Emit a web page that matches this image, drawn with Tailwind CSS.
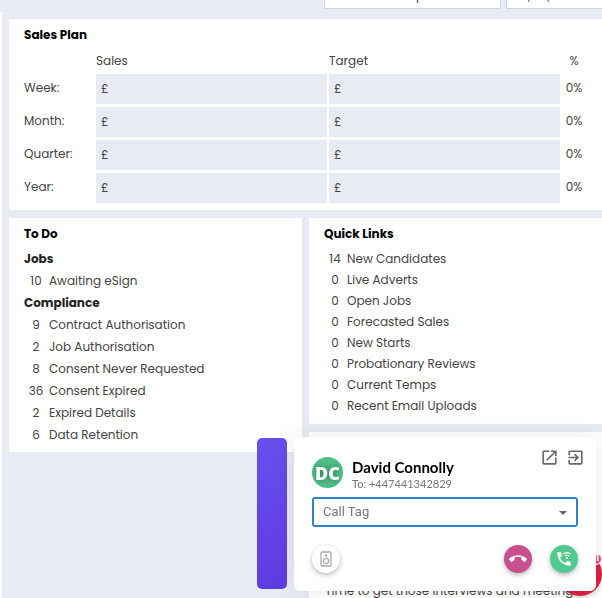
<!DOCTYPE html>
<html lang="en">
<head>
  <meta charset="UTF-8" />
  <meta name="viewport" content="width=device-width, initial-scale=1.0" />
  <title>Dashboard</title>
  <script src="https://cdn.jsdelivr.net/npm/@tailwindcss/browser@4"></script>
</head>
<body class="h-screen overflow-hidden bg-[#e8ebf3] font-[Poppins,Inter,sans-serif] text-xs text-[#444]">

  <div class="flex min-h-screen">
    <!-- Sidebar edge -->
    <div class="mt-3 w-[2px] shrink-0 bg-white"></div>

    <main class="ml-[7px] min-w-0 flex-1">
      <!-- Filter boxes -->
      <div class="-mt-[15px] flex justify-end gap-[5px] leading-5">
        <div class="h-6 w-[177px] border border-[#cfd5e8] bg-white pr-[2px] pl-[91px]">p</div>
        <div class="flex h-6 w-24 gap-[17px] border-y border-l border-[#cfd5e8] bg-white pl-[21px]"><span>,</span><span>,</span></div>
      </div>

      <!-- Sales Plan -->
      <section class="mt-[10px] bg-white pt-[5px] pr-4 pb-1 pl-[15px]">
        <h2 class="leading-[22px] font-bold text-black">Sales Plan</h2>
        <table class="w-full table-fixed border-separate border-spacing-0">
          <thead>
            <tr class="h-7 text-left">
              <th class="w-[72px] p-0"></th>
              <th class="p-0 pt-[2px] font-normal" id="sales">Sales</th>
              <th class="p-0 pt-[2px] font-normal" id="target">Target</th>
              <th class="w-6 p-0 pt-[2px] text-center font-normal">%</th>
            </tr>
          </thead>
          <tbody>
            <tr>
              <th class="p-0 pb-[5px] text-left font-normal" id="week">Week:</th>
              <td class="p-0 pr-[2px] pb-[3px]"><input type="text" value="£" aria-labelledby="week sales" class="block h-[30px] w-full bg-[#e8ebf3] px-[5px]" /></td>
              <td class="p-0 pr-[2px] pb-[3px]"><input type="text" value="£" aria-labelledby="week target" class="block h-[30px] w-full bg-[#e8ebf3] px-[5px]" /></td>
              <td class="p-0 pb-[5px] text-center">0%</td>
            </tr>
            <tr>
              <th class="p-0 pb-[5px] text-left font-normal" id="month">Month:</th>
              <td class="p-0 pr-[2px] pb-[3px]"><input type="text" value="£" aria-labelledby="month sales" class="block h-[30px] w-full bg-[#e8ebf3] px-[5px]" /></td>
              <td class="p-0 pr-[2px] pb-[3px]"><input type="text" value="£" aria-labelledby="month target" class="block h-[30px] w-full bg-[#e8ebf3] px-[5px]" /></td>
              <td class="p-0 pb-[5px] text-center">0%</td>
            </tr>
            <tr>
              <th class="p-0 pb-[5px] text-left font-normal" id="quarter">Quarter:</th>
              <td class="p-0 pr-[2px] pb-[3px]"><input type="text" value="£" aria-labelledby="quarter sales" class="block h-[30px] w-full bg-[#e8ebf3] px-[5px]" /></td>
              <td class="p-0 pr-[2px] pb-[3px]"><input type="text" value="£" aria-labelledby="quarter target" class="block h-[30px] w-full bg-[#e8ebf3] px-[5px]" /></td>
              <td class="p-0 pb-[5px] text-center">0%</td>
            </tr>
            <tr>
              <th class="p-0 pb-[5px] text-left font-normal" id="year">Year:</th>
              <td class="p-0 pr-[2px] pb-[3px]"><input type="text" value="£" aria-labelledby="year sales" class="block h-[30px] w-full bg-[#e8ebf3] px-[5px]" /></td>
              <td class="p-0 pr-[2px] pb-[3px]"><input type="text" value="£" aria-labelledby="year target" class="block h-[30px] w-full bg-[#e8ebf3] px-[5px]" /></td>
              <td class="p-0 pb-[5px] text-center">0%</td>
            </tr>
          </tbody>
        </table>
      </section>

      <div class="mt-2 grid grid-cols-2 items-start gap-[7px]">
        <!-- To Do -->
        <section class="bg-white px-[15px] pt-[5px] pb-[6px]">
          <h2 class="leading-[22px] font-bold text-black">To Do</h2>
          <h3 class="mt-[3px] text-[#222] leading-[22px] font-bold">Jobs</h3>
          <ul class="leading-[22px]">
            <li><a href="#" class="flex gap-px"><span class="w-6 text-center">10</span>Awaiting eSign</a></li>
          </ul>
          <h3 class="leading-[22px] font-bold text-[#222]">Compliance</h3>
          <ul class="leading-[22px]">
            <li><a href="#" class="flex gap-px"><span class="w-6 text-center">9</span>Contract Authorisation</a></li>
            <li><a href="#" class="flex gap-px"><span class="w-6 text-center">2</span>Job Authorisation</a></li>
            <li><a href="#" class="flex gap-px"><span class="w-6 text-center">8</span>Consent Never Requested</a></li>
            <li><a href="#" class="flex gap-px"><span class="w-6 text-center">36</span>Consent Expired</a></li>
            <li><a href="#" class="flex gap-px"><span class="w-6 text-center">2</span>Expired Details</a></li>
            <li><a href="#" class="flex gap-px"><span class="w-6 text-center">6</span>Data Retention</a></li>
          </ul>
        </section>

        <div class="flex flex-col gap-2">
          <!-- Quick Links -->
          <section class="bg-white px-[15px] pt-[5px] pb-2">
            <h2 class="leading-[22px] font-bold text-black">Quick Links</h2>
            <ul class="mt-[3px] leading-[21px]">
              <li><a href="#" class="flex gap-px"><span class="w-[22px] text-center">14</span>New Candidates</a></li>
              <li><a href="#" class="flex gap-px"><span class="w-[22px] text-center">0</span>Live Adverts</a></li>
              <li><a href="#" class="flex gap-px"><span class="w-[22px] text-center">0</span>Open Jobs</a></li>
              <li><a href="#" class="flex gap-px"><span class="w-[22px] text-center">0</span>Forecasted Sales</a></li>
              <li><a href="#" class="flex gap-px"><span class="w-[22px] text-center">0</span>New Starts</a></li>
              <li><a href="#" class="flex gap-px"><span class="w-[22px] text-center">0</span>Probationary Reviews</a></li>
              <li><a href="#" class="flex gap-px"><span class="w-[22px] text-center">0</span>Current Temps</a></li>
              <li><a href="#" class="flex gap-px"><span class="w-[22px] text-center">0</span>Recent Email Uploads</a></li>
            </ul>
          </section>

          <!-- Message of the day -->
          <section class="bg-white px-4 pt-[148px] pb-6">
            <p class="leading-[22px] whitespace-nowrap">Time to get those interviews and meeting</p>
          </section>
        </div>
      </div>
    </main>
  </div>

  <!-- Chat bubble -->
  <button type="button" aria-label="Chat" class="fixed right-0 bottom-[2px] size-11 rounded-full bg-[#e0203f] shadow-md">
    <span class="absolute top-px right-0 h-3 w-4 rounded-full border border-white bg-[#ee5076] pr-[2px] text-right text-[8px] leading-[10px] font-bold text-white">1</span>
  </button>

  <!-- Call popup handle -->
  <div class="fixed right-[315px] bottom-[9px] h-[151px] w-[30px] rounded-[5px] bg-linear-to-b from-[#694eee] to-[#5d3de0]"></div>

  <!-- Call popup -->
  <div role="dialog" aria-label="Incoming call" class="fixed right-[6px] bottom-[7px] w-[302px] rounded-md bg-white px-[18px] pt-5 pb-[18px] font-[Lato,sans-serif] shadow-[0_0_24px_rgba(0,0,0,0.09)]">
    <div class="flex h-10">
      <div class="flex size-[31px] items-center justify-center rounded-full bg-[#50bf87] font-['Open_Sans',sans-serif] text-[18px] font-extrabold text-white [text-shadow:0_0_6px_rgba(0,0,0,0.4)]">DC</div>
      <div class="ml-[9px] flex-1">
        <div class="text-[15px] leading-5 font-bold text-black">David Connolly</div>
        <div class="text-[11px] leading-[13px] text-[#777]">To: +447441342829</div>
      </div>
      <div class="-mt-[9px] -mr-[7px] flex gap-[7px] text-[#666]">
        <button type="button" aria-label="Open in new window" class="size-[19px]">
          <svg viewBox="0 0 24 24" fill="currentColor"><path d="M19 19H5V5h7V3H5a2 2 0 0 0-2 2v14a2 2 0 0 0 2 2h14c1.100 0 2-.9 2-2v-7h-2v7zM14 3v2h3.590l-9.830 9.830 1.410 1.410L19 6.410V10h2V3h-7z"/></svg>
        </button>
        <button type="button" aria-label="Exit" class="size-[19px]">
          <svg viewBox="0 0 24 24" fill="currentColor"><path d="M10.090 15.590L11.500 17l5-5-5-5-1.410 1.410L12.670 11H3v2h9.670l-2.580 2.590zM19 3H5a2 2 0 0 0-2 2v4h2V5h14v14H5v-4H3v4a2 2 0 0 0 2 2h14c1.100 0 2-.9 2-2V5c0-1.100-.9-2-2-2z"/></svg>
        </button>
      </div>
    </div>

    <div class="relative">
      <select aria-label="Call Tag" class="block h-[30px] w-full appearance-none rounded-[3px] border-2 border-[#3182d0] bg-white px-[9px] font-[Roboto,sans-serif] text-[13px] text-[#777]">
        <option>Call Tag</option>
      </select>
      <svg viewBox="0 0 8 4" class="pointer-events-none absolute top-[14px] right-[11px] h-1 w-2" fill="#666"><path d="M0 0h8L4 4z"/></svg>
    </div>

    <div class="mt-[18px] flex items-center gap-[18px]">
      <button type="button" aria-label="Speaker" class="mr-auto flex size-7 items-center justify-center rounded-full bg-white text-[#aaa] shadow-[0_2px_5px_rgba(0,0,0,0.28)]">
        <svg viewBox="0 0 12 16" class="h-4 w-3" fill="none" stroke="currentColor" stroke-width="1.300"><rect x="1" y="1" width="10" height="14" rx="1"/><circle cx="6" cy="10" r="2.600"/><circle cx="6" cy="4.500" r="1.200" fill="currentColor" stroke="none"/></svg>
      </button>
      <button type="button" aria-label="Hang up" class="flex size-7 items-center justify-center rounded-full bg-[#c8508f] text-white shadow-[0_2px_5px_rgba(0,0,0,0.28)]">
        <svg viewBox="0 0 24 24" class="size-[18px]" fill="currentColor"><path d="M12 9c-1.600 0-3.150.25-4.600.72v3.100c0 .39-.23.74-.56.9-.98.49-1.870 1.120-2.660 1.850-.18.18-.43.28-.7.28-.28 0-.53-.11-.71-.29L.29 13.080A.99.99 0 0 1 0 12.370c0-.28.110-.53.290-.71C3.340 8.780 7.460 7 12 7s8.660 1.780 11.710 4.660c.18.180.290.430.290.710 0 .28-.110.530-.290.710l-2.480 2.480c-.18.180-.430.290-.710.290-.27 0-.52-.11-.7-.28a11.300 11.300 0 0 0-2.670-1.850.99.990 0 0 1-.56-.9v-3.100C15.150 9.250 13.600 9 12 9z"/></svg>
      </button>
      <button type="button" aria-label="Answer" class="flex size-7 items-center justify-center rounded-full bg-[#50ca8e] text-white shadow-[0_2px_5px_rgba(0,0,0,0.28)]">
        <svg viewBox="0 0 24 24" class="size-[18px]" fill="currentColor"><path d="M20 15.500c-1.250 0-2.450-.2-3.570-.57a1 1 0 0 0-1.020.24l-2.200 2.200a15.100 15.100 0 0 1-6.590-6.590l2.200-2.210c.28-.26.360-.65.250-1A11.400 11.400 0 0 1 8.500 4c0-.55-.45-1-1-1H4c-.55 0-1 .45-1 1 0 9.390 7.610 17 17 17 .55 0 1-.45 1-1v-3.500c0-.55-.45-1-1-1z"/><circle cx="16" cy="10.500" r="1.400"/><path d="M13.300 8a3.800 3.800 0 0 1 5.400 0M11 5.500a7.100 7.100 0 0 1 10 0" fill="none" stroke="currentColor" stroke-width="1.500"/></svg>
      </button>
    </div>
  </div>

</body>
</html>
